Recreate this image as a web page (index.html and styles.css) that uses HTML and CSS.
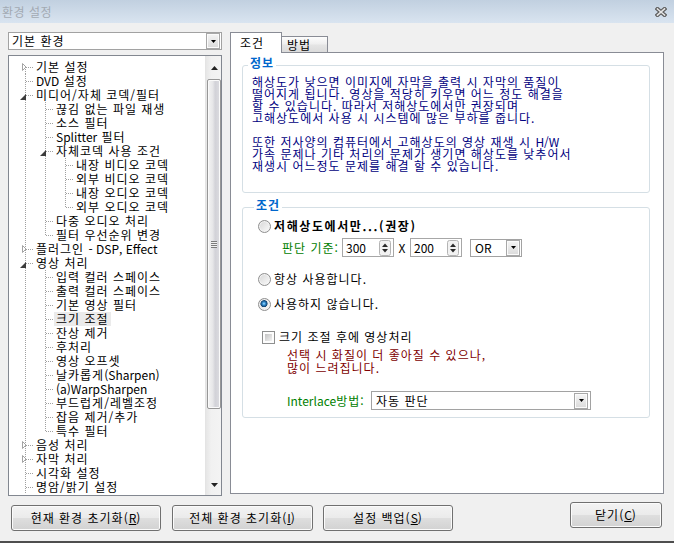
FILE: index.html
```html
<!DOCTYPE html>
<html lang="ko">
<head>
<meta charset="utf-8">
<title>환경 설정</title>
<link rel="stylesheet" href="styles.css">
</head>
<body>
<div class="window">
  <div class="titlebar">
    <span class="title">환경 설정</span>
    <svg class="close" width="12" height="10" viewBox="0 0 12 10"><path d="M2.5 2 L9.5 8 M9.5 2 L2.5 8" stroke="#5e5e5e" stroke-width="4" stroke-linecap="square" fill="none"/><path d="M2.5 2 L9.5 8 M9.5 2 L2.5 8" stroke="#e6e6e6" stroke-width="1.6" stroke-linecap="square" fill="none"/></svg>
  </div>

  <div class="main">
    <div class="left">
      <div class="combo wide">
        <span class="val">기본 환경</span>
        <span class="ddbtn"><svg width="5" height="3" viewBox="0 0 5 3"><polygon points="0,0 5,0 2.5,3" fill="#000"/></svg></span>
      </div>
      <div class="tree">
        <div class="tree-items">
          <div class="row"><span class="c first"><svg class="exp" width="20" height="14"><path d="M6.5 3.5 L10 7 L6.5 10.5 Z" fill="#fff" stroke="#a3a3a3"/></svg></span><span class="t">기본 설정</span></div>
          <div class="row"><span class="c tee"></span><span class="t"><span class="lat">DVD</span> 설정</span></div>
          <div class="row"><span class="c tee"><svg class="exp" width="20" height="14"><path d="M10 6 L10 12 L4 12 Z" fill="#3c3c3c"/></svg></span><span class="t">미디어/자체 코덱/필터</span></div>
          <div class="row"><span class="c pipe"></span><span class="c tee"></span><span class="t">끊김 없는 파일 재생</span></div>
          <div class="row"><span class="c pipe"></span><span class="c tee"></span><span class="t">소스 필터</span></div>
          <div class="row"><span class="c pipe"></span><span class="c tee"></span><span class="t"><span class="lat">Splitter</span> 필터</span></div>
          <div class="row"><span class="c pipe"></span><span class="c tee"><svg class="exp" width="20" height="14"><path d="M10 6 L10 12 L4 12 Z" fill="#3c3c3c"/></svg></span><span class="t">자체코덱 사용 조건</span></div>
          <div class="row"><span class="c pipe"></span><span class="c pipe"></span><span class="c tee"></span><span class="t">내장 비디오 코덱</span></div>
          <div class="row"><span class="c pipe"></span><span class="c pipe"></span><span class="c tee"></span><span class="t">외부 비디오 코덱</span></div>
          <div class="row"><span class="c pipe"></span><span class="c pipe"></span><span class="c tee"></span><span class="t">내장 오디오 코덱</span></div>
          <div class="row"><span class="c pipe"></span><span class="c pipe"></span><span class="c elbow"></span><span class="t">외부 오디오 코덱</span></div>
          <div class="row"><span class="c pipe"></span><span class="c tee"></span><span class="t">다중 오디오 처리</span></div>
          <div class="row"><span class="c pipe"></span><span class="c elbow"></span><span class="t">필터 우선순위 변경</span></div>
          <div class="row"><span class="c tee"><svg class="exp" width="20" height="14"><path d="M6.5 3.5 L10 7 L6.5 10.5 Z" fill="#fff" stroke="#a3a3a3"/></svg></span><span class="t">플러그인 <span class="lat">- DSP, Effect</span></span></div>
          <div class="row"><span class="c tee"><svg class="exp" width="20" height="14"><path d="M10 6 L10 12 L4 12 Z" fill="#3c3c3c"/></svg></span><span class="t">영상 처리</span></div>
          <div class="row"><span class="c pipe"></span><span class="c tee"></span><span class="t">입력 컬러 스페이스</span></div>
          <div class="row"><span class="c pipe"></span><span class="c tee"></span><span class="t">출력 컬러 스페이스</span></div>
          <div class="row"><span class="c pipe"></span><span class="c tee"></span><span class="t">기본 영상 필터</span></div>
          <div class="row"><span class="c pipe"></span><span class="c tee"></span><span class="t sel">크기 조절</span></div>
          <div class="row"><span class="c pipe"></span><span class="c tee"></span><span class="t">잔상 제거</span></div>
          <div class="row"><span class="c pipe"></span><span class="c tee"></span><span class="t">후처리</span></div>
          <div class="row"><span class="c pipe"></span><span class="c tee"></span><span class="t">영상 오프셋</span></div>
          <div class="row"><span class="c pipe"></span><span class="c tee"></span><span class="t">날카롭게<span class="lat">(Sharpen)</span></span></div>
          <div class="row"><span class="c pipe"></span><span class="c tee"></span><span class="t"><span class="lat">(a)WarpSharpen</span></span></div>
          <div class="row"><span class="c pipe"></span><span class="c tee"></span><span class="t">부드럽게/레벨조정</span></div>
          <div class="row"><span class="c pipe"></span><span class="c tee"></span><span class="t">잡음 제거/추가</span></div>
          <div class="row"><span class="c pipe"></span><span class="c elbow"></span><span class="t">특수 필터</span></div>
          <div class="row"><span class="c tee"><svg class="exp" width="20" height="14"><path d="M6.5 3.5 L10 7 L6.5 10.5 Z" fill="#fff" stroke="#a3a3a3"/></svg></span><span class="t">음성 처리</span></div>
          <div class="row"><span class="c tee"><svg class="exp" width="20" height="14"><path d="M6.5 3.5 L10 7 L6.5 10.5 Z" fill="#fff" stroke="#a3a3a3"/></svg></span><span class="t">자막 처리</span></div>
          <div class="row"><span class="c tee"></span><span class="t">시각화 설정</span></div>
          <div class="row"><span class="c tee"></span><span class="t">명암/밝기 설정</span></div>
        </div>
        <div class="vscroll">
          <div class="sb-btn up"><svg width="7" height="4" viewBox="0 0 7 4"><polygon points="0,4 7,4 3.5,0" fill="#222"/></svg></div>
          <div class="thumb"><span class="grip"></span></div>
          <div class="sb-btn down"><svg width="7" height="4" viewBox="0 0 7 4"><polygon points="0,0 7,0 3.5,4" fill="#222"/></svg></div>
        </div>
      </div>
    </div>

    <div class="right">
      <div class="tabs">
        <div class="tab active">조건</div>
        <div class="tab">방법</div>
      </div>
      <div class="panel">
        <fieldset class="group info">
          <legend>정보</legend>
          <p class="info-text">해상도가 낮으면 이미지에 자막을 출력 시 자막의 품질이<br>떨어지게 됩니다. 영상을 적당히 키우면 어느 정도 해결을<br>할 수 있습니다. 따라서 저해상도에서만 권장되며<br>고해상도에서 사용 시 시스템에 많은 부하를 줍니다.<br><br>또한 저사양의 컴퓨터에서 고해상도의 영상 재생 시 <span class="lat">H/W</span><br>가속 문제나 기타 처리의 문제가 생기면 해상도를 낮추어서<br>재생시 어느정도 문제를 해결 할 수 있습니다.</p>
        </fieldset>
        <fieldset class="group cond">
          <legend>조건</legend>
          <div class="opt r1"><span class="radio"></span><span class="opt-label bold">저해상도에서만...(권장)</span></div>
          <div class="criteria">
            <span class="green crit-label">판단 기준:</span>
            <span class="spin"><span class="spin-val lat">300</span><svg class="spin-btn" width="14" height="16" viewBox="0 0 14 16"><rect x="1.5" y="0.5" width="11" height="15" rx="2" fill="#f2f2f2" stroke="#b4b4b4"/><polygon points="4,7 10,7 7,3.5" fill="#2a2a2a"/><polygon points="4,9 10,9 7,12.5" fill="#2a2a2a"/></svg></span>
            <span class="times lat">X</span>
            <span class="spin"><span class="spin-val lat">200</span><svg class="spin-btn" width="14" height="16" viewBox="0 0 14 16"><rect x="1.5" y="0.5" width="11" height="15" rx="2" fill="#f2f2f2" stroke="#b4b4b4"/><polygon points="4,7 10,7 7,3.5" fill="#2a2a2a"/><polygon points="4,9 10,9 7,12.5" fill="#2a2a2a"/></svg></span>
            <span class="combo small"><span class="val lat">OR</span><span class="ddbtn"><svg width="5" height="3" viewBox="0 0 5 3"><polygon points="0,0 5,0 2.5,3" fill="#000"/></svg></span></span>
          </div>
          <div class="opt r2"><span class="radio"></span><span class="opt-label">항상 사용합니다.</span></div>
          <div class="opt r3"><span class="radio on"></span><span class="opt-label">사용하지 않습니다.</span></div>
          <div class="opt chk"><span class="check"></span><span class="chk-label">크기 조절 후에 영상처리</span></div>
          <p class="warn">선택 시 화질이 더 좋아질 수 있으나,<br>많이 느려집니다.</p>
          <div class="interlace">
            <span class="green il-label"><span class="lat">Interlace</span>방법:</span>
            <span class="combo long"><span class="val">자동 판단</span><span class="ddbtn"><svg width="5" height="3" viewBox="0 0 5 3"><polygon points="0,0 5,0 2.5,3" fill="#000"/></svg></span></span>
          </div>
        </fieldset>
      </div>
    </div>
  </div>

  <div class="buttons">
    <button class="btn b1">현재 환경 초기화(<u>R</u>)</button>
    <button class="btn b2">전체 환경 초기화(<u>I</u>)</button>
    <button class="btn b3">설정 백업(<u>S</u>)</button>
    <button class="btn b4">닫기(<u>C</u>)</button>
  </div>
</div>
</body>
</html>
```

FILE: styles.css
```css
* { box-sizing: border-box; }
html, body { margin: 0; padding: 0; }
body {
  width: 674px;
  height: 543px;
  overflow: hidden;
  background: #f0f0f0;
  font-family: "Noto Sans CJK KR", "Noto Sans", sans-serif;
  font-size: 12px;
  letter-spacing: 1px;
  color: #000;
  --v: repeating-linear-gradient(to bottom, #a0a0a0 0 1px, transparent 1px 2px);
  --h: repeating-linear-gradient(to right, #a0a0a0 0 1px, transparent 1px 2px);
}
.lat { letter-spacing: 0; }

.window {
  height: 543px;
  display: flex;
  flex-direction: column;
  border-bottom: 2px solid #4e4e4e;
}

/* title bar */
.titlebar {
  height: 23px;
  flex: none;
  display: flex;
  align-items: center;
  justify-content: space-between;
  padding: 0 7px 0 2px;
  background: linear-gradient(#c1d0e0, #d9e4f0);
}
.title { color: #a3aab3; line-height: 14px; letter-spacing: 0.5px; }
.close { display: block; }

/* main area */
.main {
  flex: none;
  display: flex;
  gap: 8px;
  padding: 9px 0 0 8px;
}
.left {
  width: 214px;
  display: flex;
  flex-direction: column;
  gap: 5px;
}

/* combo boxes */
.combo {
  display: flex;
  align-items: center;
  background: #fff;
  border: 1px solid #a2a2a2;
  line-height: 14px;
}
.combo .val { flex: 1; white-space: nowrap; }
.ddbtn {
  width: 14px;
  height: 16px;
  flex: none;
  display: flex;
  align-items: center;
  justify-content: center;
  border: 1px solid #a8a8a8;
  background: linear-gradient(#f5f5f5, #dadada);
  box-shadow: inset 0 0 0 1px #fbfbfb;
}
.ddbtn svg { display: block; }
.combo.wide { height: 18px; padding: 0 1px 0 3px; }
.combo.small { width: 52px; height: 18px; padding: 0 1px 0 4px; margin-left: 8px; }
.combo.long { width: 220px; height: 19px; padding: 0 2px 0 4px; }

/* tree */
.tree {
  height: 441px;
  display: flex;
  border: 1px solid #828790;
  background: #fff;
  overflow: hidden;
}
.tree-items {
  flex: 1;
  padding: 4px 0 0 7px;
  overflow: hidden;
}
.row {
  display: flex;
  align-items: center;
  height: 14px;
  line-height: 14px;
  white-space: nowrap;
}
.c {
  width: 20px;
  height: 14px;
  flex: none;
  background-repeat: no-repeat;
}
.c .exp { display: block; }
.pipe {
  background-image: var(--v);
  background-size: 1px 14px;
  background-position: 9px 0;
}
.tee {
  background-image: var(--v), var(--h);
  background-size: 1px 14px, 8px 1px;
  background-position: 9px 0, 10px 7px;
}
.elbow {
  background-image: var(--v), var(--h);
  background-size: 1px 8px, 8px 1px;
  background-position: 9px 0, 10px 7px;
}
.first {
  background-image: var(--v), var(--h);
  background-size: 1px 7px, 8px 1px;
  background-position: 9px 7px, 10px 7px;
}
.t { display: block; height: 14px; }
.sel { background: #ebebeb; margin-left: -2px; padding: 0 2px; }

/* scrollbar */
.vscroll {
  width: 16px;
  flex: none;
  display: flex;
  flex-direction: column;
  background: linear-gradient(to right, #e6e6e6, #f1f1f1 35%, #f3f3f3);
  border-left: 1px solid #e4e4e4;
}
.sb-btn {
  flex: none;
  display: flex;
  justify-content: center;
}
.sb-btn svg { display: block; }
.sb-btn.up { height: 23px; align-items: center; padding-left: 1px; }
.sb-btn.down { height: 20px; align-items: center; margin-top: auto; padding-left: 1px; }
.thumb {
  height: 330px;
  margin-left: 1px;
  border: 1px solid #979797;
  border-radius: 2px;
  background: linear-gradient(to right, #f4f4f4, #e6e6e8 40%, #d2d2d8 60%, #dcdce0);
  box-shadow: inset 0 0 0 1px #fafafa;
  display: flex;
  align-items: center;
  justify-content: center;
}
.grip {
  width: 6px;
  height: 7px;
  background: repeating-linear-gradient(to bottom, #7c7c7c 0 1px, #f0f0f0 1px 2px);
}

/* right side */
.right {
  width: 434px;
  display: flex;
  flex-direction: column;
}
.tabs {
  height: 20px;
  display: flex;
  align-items: flex-end;
}
.tab {
  border: 1px solid #898c95;
  border-bottom: none;
  line-height: 14px;
}
.tab.active {
  width: 52px;
  height: 21px;
  margin-bottom: -1px;
  padding: 3px 0 0 9px;
  background: #fff;
  position: relative;
  z-index: 1;
}
.tab:not(.active) {
  width: 47px;
  height: 16px;
  margin-left: -1px;
  padding: 1px 0 0 5px;
  background: linear-gradient(#fdfdfd, #efefef 45%, #e4e4e4 55%, #dbdbdb);
}
.panel {
  height: 442px;
  border: 1px solid #898c95;
  background: #fff;
  padding: 0 13px 0 11px;
}

/* group boxes */
.group {
  margin: 0;
  min-width: 0;
  border: 1px solid #d5dfe5;
  border-radius: 3px;
}
.group legend {
  padding: 0 2px 5px;
  margin-left: -4px;
  line-height: 14px;
  color: #0066cc;
  font-weight: bold;
}
.info { margin-top: 3px; padding: 1px 9px 20px; }
.info-text {
  margin: 0;
  line-height: 12px;
  color: #000080;
  white-space: nowrap;
}
.cond { margin-top: 5px; padding: 2px 9px 7px 15px; }

.opt { display: flex; align-items: center; height: 14px; line-height: 14px; }
.opt.r2 { margin-top: 15px; }
.opt.r3 { margin-top: 11px; }
.opt.chk { margin-top: 19px; padding-left: 4px; }
.radio {
  width: 13px;
  height: 13px;
  flex: none;
  border-radius: 50%;
  border: 1px solid #8f8f8f;
  background: linear-gradient(135deg, #d6d6d6, #fbfbfb);
  box-shadow: inset 0 0 0 1px #f3f3f3;
}
.radio.on {
  background:
    radial-gradient(circle at 45% 42%, #a9e0ff 0, #2f8bd0 1.6px, #174a78 3px, #174a78 3.3px, transparent 3.9px),
    linear-gradient(135deg, #d6d6d6, #fbfbfb);
}
.opt-label { margin-left: 3px; white-space: nowrap; }
.bold { font-weight: bold; letter-spacing: 1.6px; }
.check {
  width: 13px;
  height: 13px;
  flex: none;
  border: 1px solid #8e8f8f;
  padding: 2px;
  background: linear-gradient(135deg, #c3c3c3, #f2f2f2) content-box, #fdfdfd;
}
.chk-label { margin-left: 4px; white-space: nowrap; }

.green { color: #008000; white-space: nowrap; }
.criteria {
  display: flex;
  align-items: center;
  height: 19px;
  margin-top: 5px;
  padding-left: 24px;
  line-height: 14px;
}
.crit-label { width: 60px; }
.spin {
  width: 52px;
  height: 19px;
  display: flex;
  align-items: center;
  border: 1px solid #a7a7a7;
  background: #fff;
  padding: 0 1px 0 3px;
}
.spin-val { flex: 1; }
.spin-btn { display: block; }
.times { width: 16px; text-align: center; }

.warn {
  margin: 4px 0 0 29px;
  line-height: 13px;
  color: #800000;
  white-space: nowrap;
}
.interlace {
  display: flex;
  align-items: center;
  margin-top: 17px;
  padding-left: 29px;
  line-height: 14px;
}
.il-label { width: 84px; }

/* bottom buttons */
.buttons {
  display: flex;
  align-items: flex-start;
  margin-top: 6px;
  padding: 0 12px 0 11px;
}
.btn {
  height: 26px;
  margin: 0;
  padding: 0;
  border: 1px solid #707070;
  border-radius: 3px;
  background: linear-gradient(#f3f3f3, #ebebeb 48%, #dedede 52%, #d2d2d2);
  box-shadow: inset 0 0 0 1px #fbfbfb;
  font-family: inherit;
  font-size: 12px;
  letter-spacing: 1px;
  line-height: 14px;
  color: #000;
  display: flex;
  align-items: center;
  justify-content: center;
}
.btn u { text-underline-offset: 1px; letter-spacing: 0; }
.b1 { width: 150px; margin-top: 3px; }
.b2 { width: 141px; margin-top: 3px; margin-left: 11px; }
.b3 { width: 130px; margin-top: 3px; margin-left: 10px; }
.b4 { width: 92px; margin-left: auto; }
```
